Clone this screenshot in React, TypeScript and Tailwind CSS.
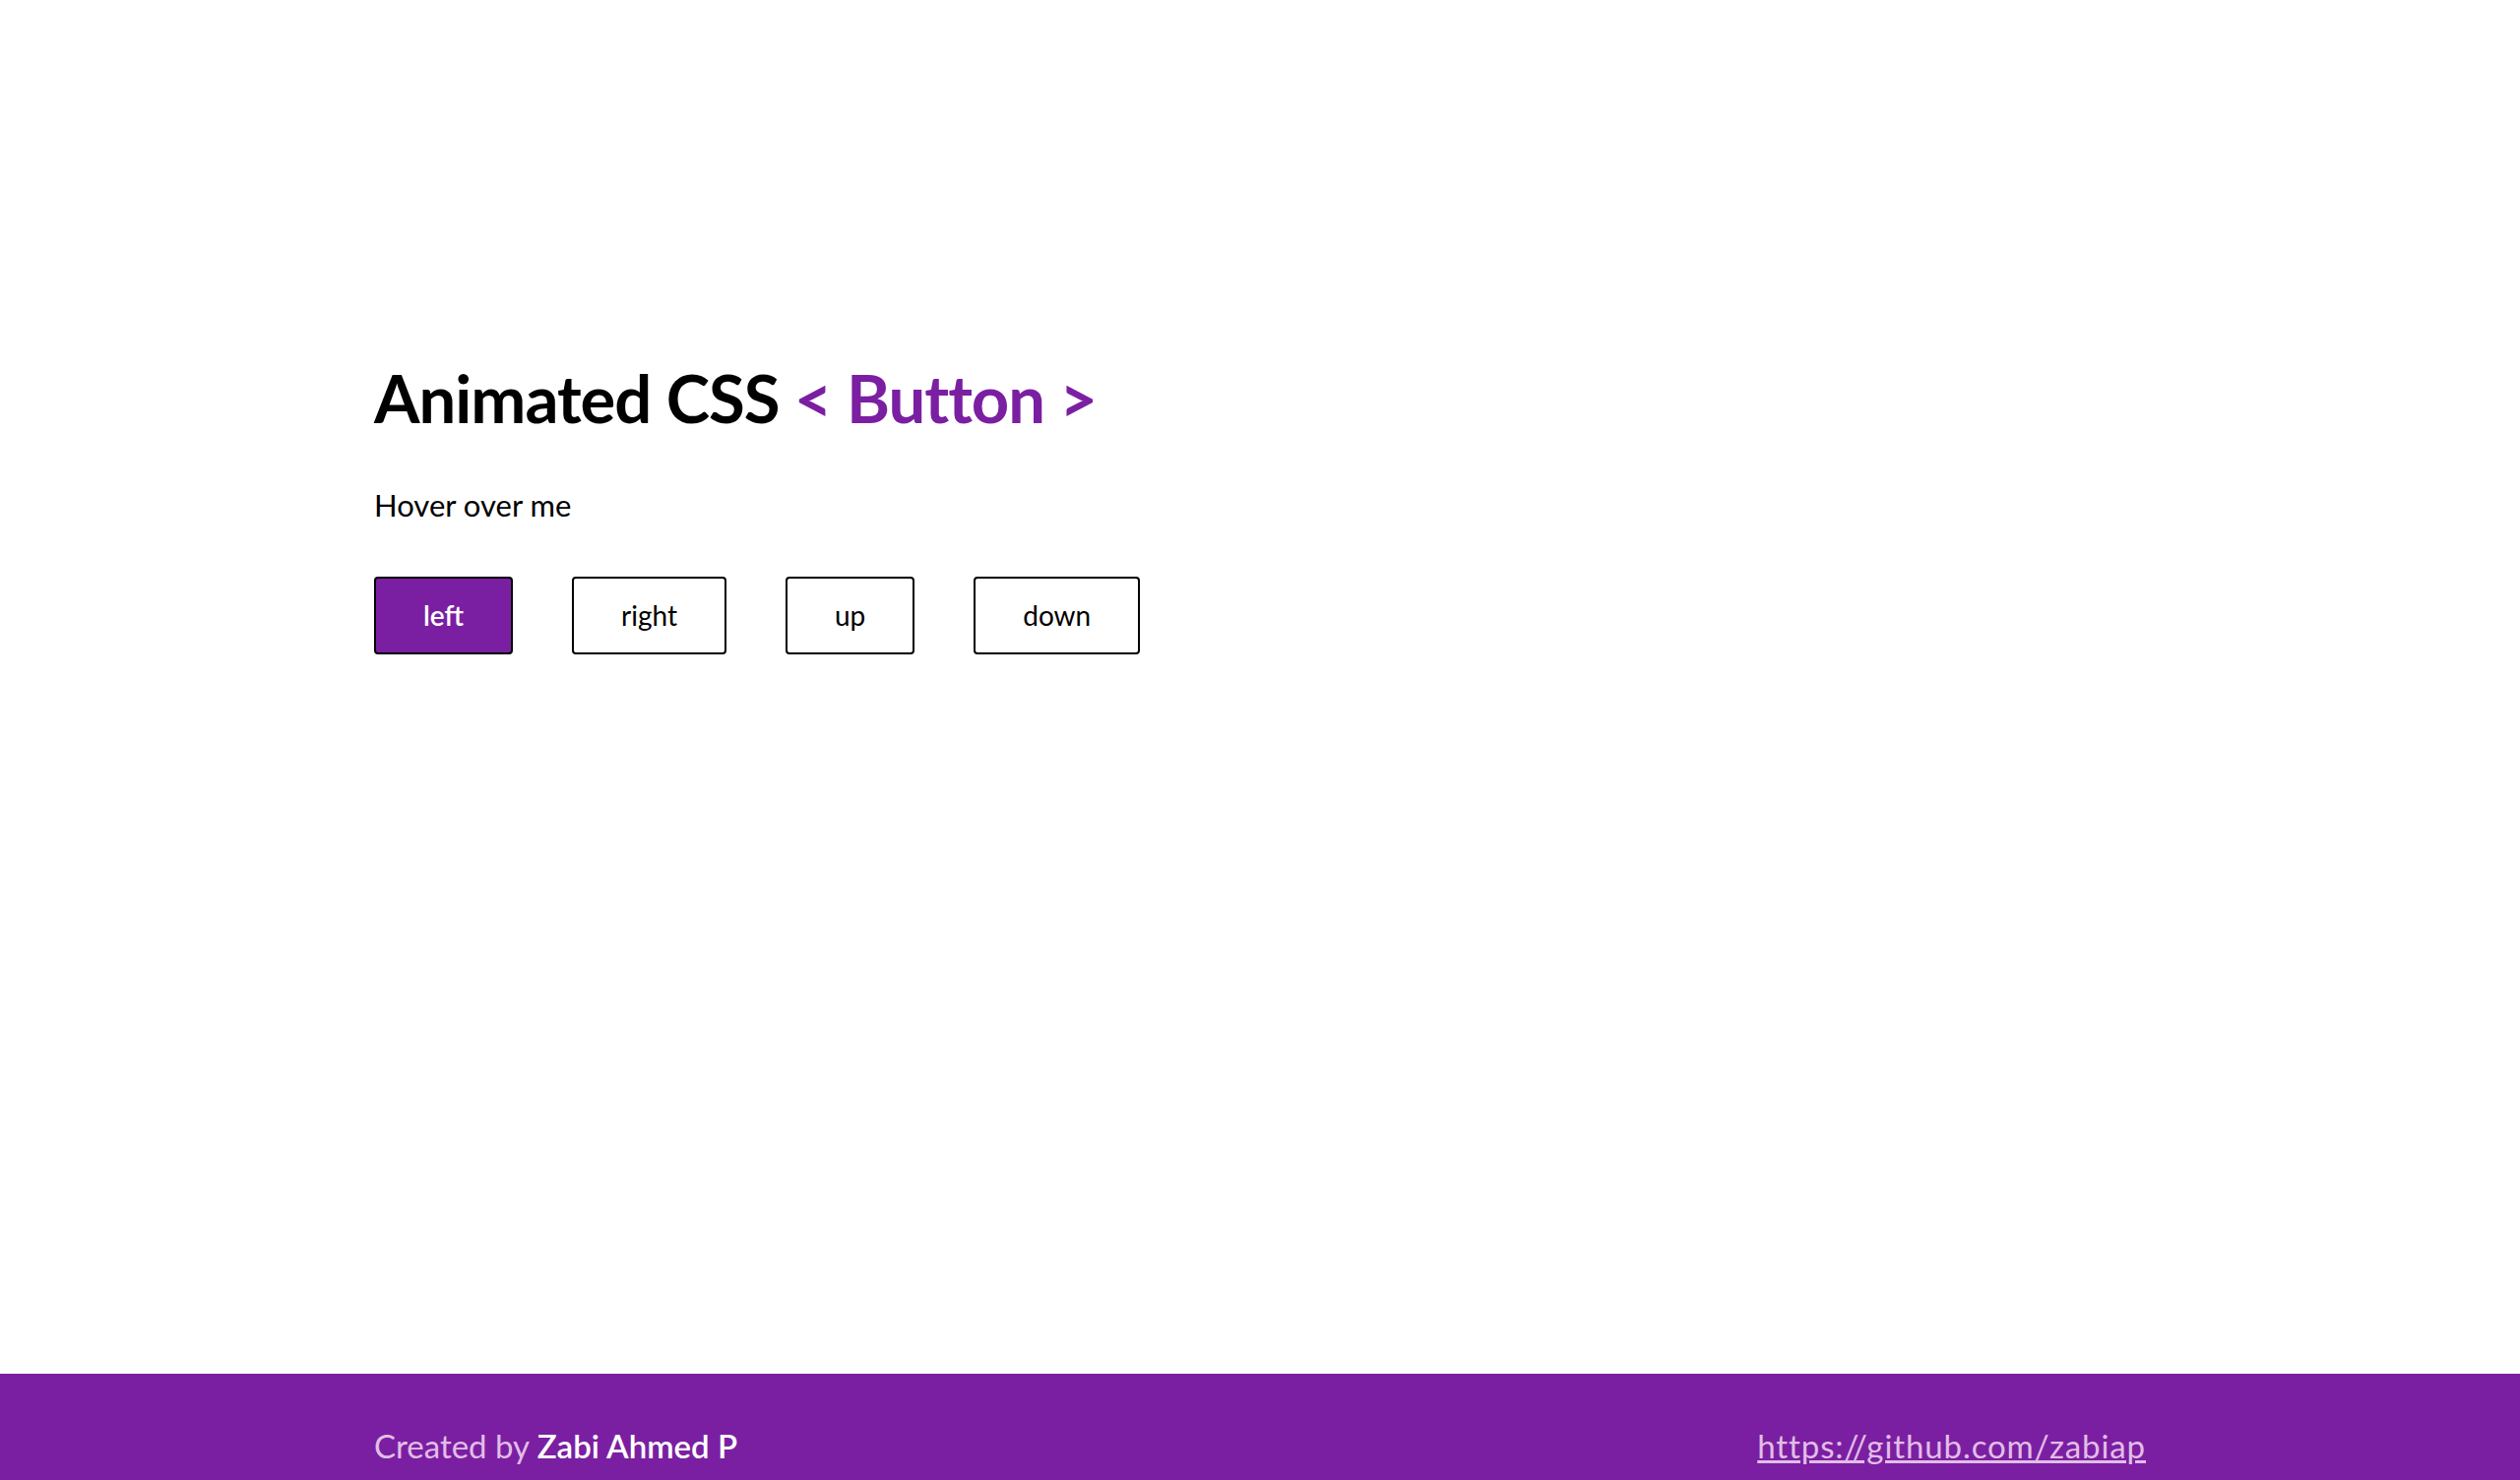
import React from 'react';

const buttons = ['left', 'right', 'up', 'down'];

const App: React.FC = () => {
    return (
        <div className="min-h-screen bg-white font-['Lato',sans-serif] text-black">
            <main className="h-[1396px] pt-[364px]">
                <div className="w-[1800px] mx-auto">
                    <h1 className="text-[67px] leading-[1.2] font-bold tracking-[-1px]">
                        Animated CSS <span className="text-[#7b1fa2]">&lt; Button &gt;</span>
                    </h1>
                    <p className="mt-[51px] text-[31px] leading-[1.2]">Hover over me</p>
                    <div className="mt-[53px] flex gap-[60px]">
                        {buttons.map((label, i) => (
                            <button
                                key={label}
                                className={
                                    i === 0
                                        ? 'h-[79px] px-[48px] border-2 border-black rounded-[4px] bg-[#7b1fa2] text-white text-[28px] font-semibold'
                                        : 'h-[79px] px-[48px] border-2 border-black rounded-[4px] bg-white text-black text-[28px]'
                                }
                            >
                                {label}
                            </button>
                        ))}
                    </div>
                </div>
            </main>
            <footer className="bg-[#7b1fa2] pt-[54px] pb-[60px]">
                <div className="w-[1800px] mx-auto flex justify-between items-center text-[33px] leading-[1.2]">
                    <p className="text-[#e1bee7]">
                        Created by <span className="text-white font-semibold">Zabi Ahmed P</span>
                    </p>
                    <a href="https://github.com/zabiap" className="text-[#e1bee7] underline tracking-[0.9px]">
                        https://github.com/zabiap
                    </a>
                </div>
            </footer>
        </div>
    );
};

export default App;
